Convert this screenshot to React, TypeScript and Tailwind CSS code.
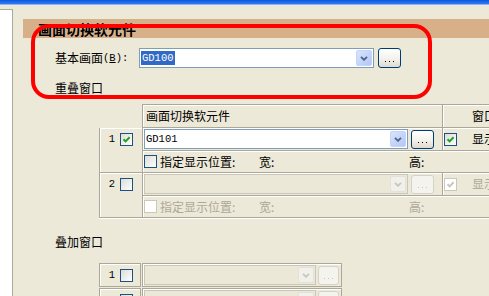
import React from "react";

const mono = "font-['Liberation_Mono',monospace] text-[10.5px]";

function Check({ checked = false, disabled = false }: { checked?: boolean; disabled?: boolean }) {
  return (
    <div
      className={`w-[13px] h-[13px] border flex items-center justify-center shrink-0 ${
        disabled ? "border-[#CAC8BB] bg-white" : "border-[#1C5180] bg-linear-to-br from-[#DCDCD7] to-white"
      }`}
    >
      {checked && (
        <svg width="11" height="11" viewBox="0 0 11 11">
          <path d="M2.5 5.2 L4.6 7.4 L8.6 3.2" fill="none" stroke={disabled ? "#C9C7BA" : "#21A121"} strokeWidth="2" />
        </svg>
      )}
    </div>
  );
}

function Combo({
  className = "",
  disabled = false,
  children,
}: {
  className?: string;
  disabled?: boolean;
  children?: React.ReactNode;
}) {
  return (
    <div
      className={`h-[20px] border flex items-center shrink-0 ${
        disabled ? "border-[#C9C7BA] bg-[#EBE8D8]" : "border-[#7F9DB9] bg-white"
      } ${className}`}
    >
      <div className="flex-1 pl-[1px] flex items-center">{children}</div>
      <div
        className={`w-[16px] h-[16px] mr-[1px] rounded-[2px] flex items-center justify-center ${
          disabled ? "bg-[#F1F0EA] border border-[#E4E2D8]" : "bg-linear-to-br from-[#D9E4FD] to-[#B3C7F5] border border-[#C3D3FD]"
        }`}
      >
        <svg width="8" height="5" viewBox="0 0 8 5">
          <path d="M1 0.8 L4 3.8 L7 0.8" fill="none" stroke={disabled ? "#C9C7BA" : "#4D6185"} strokeWidth="1.8" />
        </svg>
      </div>
    </div>
  );
}

function Dots({ className = "", disabled = false }: { className?: string; disabled?: boolean }) {
  return (
    <div
      className={`shrink-0 rounded-[3px] border flex items-end justify-center pb-[5px] gap-[3px] ${
        disabled ? "border-[#D5D3C8] bg-[#F4F3EE]" : "border-[#003C74] bg-linear-to-b from-white via-[#F4F3EE] to-[#DEDACE]"
      } ${className}`}
    >
      <div className={`w-[1px] h-[1px] ${disabled ? "bg-[#C9C7BA]" : "bg-black"}`} />
      <div className={`w-[1px] h-[1px] ${disabled ? "bg-[#C9C7BA]" : "bg-black"}`} />
      <div className={`w-[1px] h-[1px] ${disabled ? "bg-[#C9C7BA]" : "bg-black"}`} />
    </div>
  );
}

function Row({ n, enabled, value }: { n: string; enabled: boolean; value?: string }) {
  const dis = !enabled;
  const txt = dis ? "text-[#ACA899]" : "text-black";
  return (
    <div className="flex h-[45px]">
      <div className="w-[43px] border-l border-b border-[#ACA899] shadow-[inset_1px_1px_0_#fff] flex justify-end pr-[9px]">
        <div className="h-[22px] flex items-center gap-[5px]">
          <span className={mono}>{n}</span>
          <Check checked={enabled} />
        </div>
      </div>
      <div className="flex-1 flex flex-col">
        <div className="h-[23px] flex border-b border-[#ACA899]">
          <div className="w-[300px] border-l border-[#ACA899] shadow-[inset_1px_1px_0_#fff] flex items-center pl-[1px]">
            <Combo className="w-[264px]" disabled={dis}>
              {value && <span className={mono}>{value}</span>}
            </Combo>
            <Dots className="ml-[3px] w-[23px] h-[19px]" disabled={dis} />
          </div>
          <div className="flex-1 border-l border-[#ACA899] shadow-[inset_1px_1px_0_#fff] flex items-center pl-[1px]">
            <Check checked disabled={dis} />
            <span className={`ml-[15px] whitespace-nowrap ${txt}`}>显示</span>
          </div>
        </div>
        <div className="h-[22px] flex items-center border-l border-b border-[#ACA899] shadow-[inset_1px_1px_0_#fff] pl-[1px]">
          <Check disabled={dis} />
          <span className={`ml-[3px] w-[99px] ${txt}`}>指定显示位置:</span>
          <span className={`w-[150px] ${txt}`}>宽:</span>
          <span className={txt}>高:</span>
        </div>
      </div>
    </div>
  );
}

function Row2({ n }: { n: string }) {
  return (
    <div className="flex h-[24px] gap-[1px]">
      <div className="w-[42px] border border-[#ACA899] shadow-[inset_1px_1px_0_#fff] flex items-center justify-end pr-[7px] gap-[5px]">
        <span className={mono}>{n}</span>
        <Check />
      </div>
      <div className="w-[200px] border border-[#ACA899] shadow-[inset_1px_1px_0_#fff] flex items-center pl-[1px]">
        <Combo className="w-[172px] h-[19px]" disabled />
        <Dots className="ml-[2px] w-[21px] h-[19px]" disabled />
      </div>
    </div>
  );
}

export default function App() {
  return (
    <div className="relative w-[489px] h-[296px] overflow-hidden bg-[#ECE9D8] font-['Noto_Sans_CJK_SC',sans-serif] text-[12px] leading-none text-black">
      <div className="h-[5px] bg-linear-to-b from-[#0A56E0] to-[#2F7BF2] border-b border-[#8FB2F3]" />
      <div className="flex">
        <div className="w-[13px] h-[300px] mt-[4px] bg-white border-r border-t border-[#ACA899] shrink-0" />
        <div className="flex-1 pl-[10px] pt-[14px] flex flex-col">
          <div className="h-[19px] bg-[#D7B08A] flex items-center pl-[15px] font-bold text-[14px]">画面切换软元件</div>

          <div className="mt-[10px] h-[20px] flex items-center pl-[32px]">
            <div className="w-[84px] flex items-center">
              <span>基本画面</span>
              <span className={mono}>
                (<span className="underline">B</span>):
              </span>
            </div>
            <Combo className="w-[235px]">
              <span className={`${mono} bg-[#316AC5] text-white px-[1px] leading-[14px]`}>GD100</span>
            </Combo>
            <Dots className="ml-[4px] w-[23px] h-[20px]" />
          </div>

          <div className="mt-[12px] h-[16px] flex items-center pl-[32px]">重叠窗口</div>

          <div className="mt-[8px] ml-[76px] w-[500px] flex flex-col">
            <div className="flex h-[24px]">
              <div className="w-[43px]" />
              <div className="w-[300px] border-l border-t border-b border-[#ACA899] shadow-[inset_1px_1px_0_#fff] flex items-center pl-[3px]">
                画面切换软元件
              </div>
              <div className="flex-1 border-l border-t border-b border-[#ACA899] shadow-[inset_1px_1px_0_#fff] flex items-center pl-[29px] whitespace-nowrap">
                窗口
              </div>
            </div>
            <Row n="1" enabled value="GD101" />
            <div className="shadow-[0_1px_0_#fff]">
              <Row n="2" enabled={false} />
            </div>
          </div>

          <div className="mt-[16px] h-[16px] flex items-center pl-[32px]">叠加窗口</div>

          <div className="mt-[13px] ml-[76px] flex flex-col gap-[1px]">
            <Row2 n="1" />
            <Row2 n="2" />
          </div>
        </div>
      </div>

      <div className="absolute left-[31px] top-[24px] w-[401px] h-[75px] border-[4px] border-[#FF0000] rounded-[18px] pointer-events-none" />
    </div>
  );
}
